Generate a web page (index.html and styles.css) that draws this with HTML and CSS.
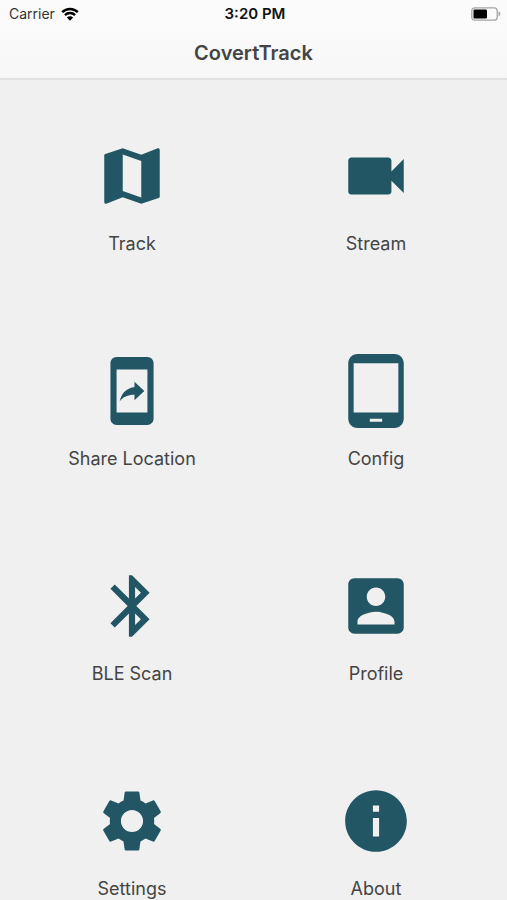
FILE: index.html
```html
<!DOCTYPE html>
<html lang="en">
<head>
  <meta charset="UTF-8">
  <meta name="viewport" content="width=device-width, initial-scale=1.0">
  <title>CovertTrack</title>
  <link rel="stylesheet" href="styles.css">
</head>
<body>
  <header class="header">
    <div class="status-bar">
      <div class="carrier">
        <span>Carrier</span>
        <svg class="wifi" viewBox="0 0 18 14" aria-hidden="true">
          <path d="M1.2 5.2a11.2 11.2 0 0 1 15.6 0M3.9 8.1a7.3 7.3 0 0 1 10.2 0" fill="none" stroke="currentColor" stroke-width="2.4"/>
          <path d="M9 13.8l-3.1-3.2a4.4 4.4 0 0 1 6.2 0z" fill="currentColor"/>
        </svg>
      </div>
      <div class="time">3:20 PM</div>
      <svg class="battery" viewBox="0 0 30 14" aria-hidden="true">
        <rect x="0.8" y="0.8" width="25.4" height="12.4" rx="3" fill="none" stroke="#a5a5a5" stroke-width="1.3"/>
        <rect x="2.5" y="2.5" width="13.5" height="9" rx="1.2" fill="#000"/>
        <path d="M27.5 4.6c1.1.3 1.8 1.2 1.8 2.4s-.7 2.1-1.8 2.4z" fill="#a5a5a5"/>
      </svg>
    </div>
    <h1>CovertTrack</h1>
  </header>

  <main class="menu">
    <a class="menu-item" href="#track">
      <svg viewBox="0 0 24 24" aria-hidden="true"><path d="M20.5 3l-.16.03L15 5.1 9 3 3.36 4.9c-.21.07-.36.25-.36.48V20.5c0 .28.22.5.5.5l.16-.03L9 18.9l6 2.1 5.64-1.9c.21-.07.36-.25.36-.48V3.5c0-.28-.22-.5-.5-.5zM15 19l-6-2.11V5l6 2.11V19z"/></svg>
      <span>Track</span>
    </a>
    <a class="menu-item" href="#stream">
      <svg viewBox="0 0 24 24" aria-hidden="true"><path d="M17 10.5V7c0-.55-.45-1-1-1H4c-.55 0-1 .45-1 1v10c0 .55.45 1 1 1h12c.55 0 1-.45 1-1v-3.5l4 4v-11l-4 4z"/></svg>
      <span>Stream</span>
    </a>
    <a class="menu-item" href="#share">
      <svg viewBox="0 0 24 24" aria-hidden="true"><path d="M17 1H7c-1.1 0-1.99.9-1.99 2v18c0 1.1.89 2 1.99 2h10c1.1 0 2-.9 2-2V3c0-1.1-.9-2-2-2zm0 18H7V5h10v14zm-4.2-5.78v1.75l3.2-2.99L12.8 9v1.7c-3.11.43-4.35 2.56-4.8 4.7 1.11-1.5 2.58-2.18 4.8-2.18z"/></svg>
      <span>Share Location</span>
    </a>
    <a class="menu-item" href="#config">
      <svg viewBox="0 0 24 24" aria-hidden="true"><path d="M18 0H6C4.34 0 3 1.34 3 3v18c0 1.66 1.34 3 3 3h12c1.66 0 3-1.34 3-3V3c0-1.66-1.34-3-3-3zm-4 22h-4v-1h4v1zm5.25-3H4.75V3h14.5v16z"/></svg>
      <span>Config</span>
    </a>
    <a class="menu-item" href="#ble">
      <svg viewBox="0 0 24 24" aria-hidden="true"><path d="M17.71 7.71L12 2h-1v7.59L6.41 5 5 6.41 10.59 12 5 17.59 6.41 19 11 14.41V22h1l5.71-5.71-4.3-4.29 4.3-4.29zM13 5.83l1.88 1.88L13 9.59V5.83zm1.88 10.46L13 18.17v-3.76l1.88 1.88z"/></svg>
      <span>BLE Scan</span>
    </a>
    <a class="menu-item" href="#profile">
      <svg viewBox="0 0 24 24" aria-hidden="true"><path d="M3 5v14c0 1.1.89 2 2 2h14c1.1 0 2-.9 2-2V5c0-1.1-.9-2-2-2H5c-1.11 0-2 .9-2 2zm12 4c0 1.66-1.34 3-3 3s-3-1.34-3-3 1.34-3 3-3 3 1.34 3 3zm-9 8c0-2 4-3.1 6-3.1s6 1.1 6 3.1v1H6v-1z"/></svg>
      <span>Profile</span>
    </a>
    <a class="menu-item" href="#settings">
      <svg viewBox="0 0 24 24" aria-hidden="true"><path d="M19.14 12.94c.04-.3.06-.61.06-.94 0-.32-.02-.64-.07-.94l2.03-1.58c.18-.14.23-.41.12-.61l-1.92-3.32c-.12-.22-.37-.29-.59-.22l-2.39.96c-.5-.38-1.03-.7-1.62-.94l-.36-2.54c-.04-.24-.24-.41-.48-.41h-3.84c-.24 0-.43.17-.47.41l-.36 2.54c-.59.24-1.13.57-1.62.94l-2.39-.96c-.22-.08-.47 0-.59.22L2.74 8.87c-.12.21-.08.47.12.61l2.03 1.58c-.05.3-.09.63-.09.94s.02.64.07.94l-2.03 1.58c-.18.14-.23.41-.12.61l1.92 3.32c.12.22.37.29.59.22l2.39-.96c.5.38 1.03.7 1.62.94l.36 2.54c.05.24.24.41.48.41h3.84c.24 0 .44-.17.47-.41l.36-2.54c.59-.24 1.13-.56 1.62-.94l2.39.96c.22.08.47 0 .59-.22l1.92-3.32c.12-.22.07-.47-.12-.61l-2.01-1.58zM12 15.6c-1.98 0-3.6-1.62-3.6-3.6s1.62-3.6 3.6-3.6 3.6 1.62 3.6 3.6-1.62 3.6-3.6 3.6z"/></svg>
      <span>Settings</span>
    </a>
    <a class="menu-item" href="#about">
      <svg viewBox="0 0 24 24" aria-hidden="true"><path d="M12 2C6.48 2 2 6.48 2 12s4.48 10 10 10 10-4.48 10-10S17.52 2 12 2zm1 15h-2v-6h2v6zm0-8h-2V7h2v2z"/></svg>
      <span>About</span>
    </a>
  </main>
</body>
</html>
```
FILE: styles.css
```css
* {
  box-sizing: border-box;
}

body {
  display: flex;
  flex-direction: column;
  height: 100vh;
  margin: 0;
  font-family: Inter, Roboto, sans-serif;
  background-color: #f0f0f0;
  color: #444;
}

.header {
  flex-shrink: 0;
  background: linear-gradient(#fcfcfc, #f7f7f7);
  border-bottom: 2px solid #e0e0e0;
}

.status-bar {
  display: grid;
  grid-template-columns: 1fr auto 1fr;
  align-items: center;
  height: 27px;
  padding: 0 6px 0 9px;
  font-size: 14px;
  color: #333;
}

.carrier {
  display: flex;
  align-items: center;
  gap: 6px;
}

.wifi {
  width: 18px;
  height: 14px;
  color: #000;
}

.time {
  font-size: 15px;
  font-weight: 600;
  color: #111;
}

.battery {
  width: 30px;
  height: 14px;
  justify-self: end;
}

h1 {
  margin: 0;
  padding: 13px 0 12px;
  font-size: 20px;
  font-weight: 600;
  line-height: 26px;
  text-align: center;
}

.menu {
  display: grid;
  grid-template-columns: 1fr 1fr;
  grid-auto-rows: 215px;
  flex: 1;
  min-height: 0;
  padding: 10px 9px 10px 10px;
  overflow-y: auto;
  scrollbar-width: none;
}

.menu-item {
  display: flex;
  flex-direction: column;
  align-items: center;
  justify-content: center;
  gap: 19px;
  font-size: 18px;
  line-height: 24px;
  color: inherit;
  text-decoration: none;
}

.menu-item svg {
  width: 74px;
  height: 74px;
  fill: #235665;
}
```
